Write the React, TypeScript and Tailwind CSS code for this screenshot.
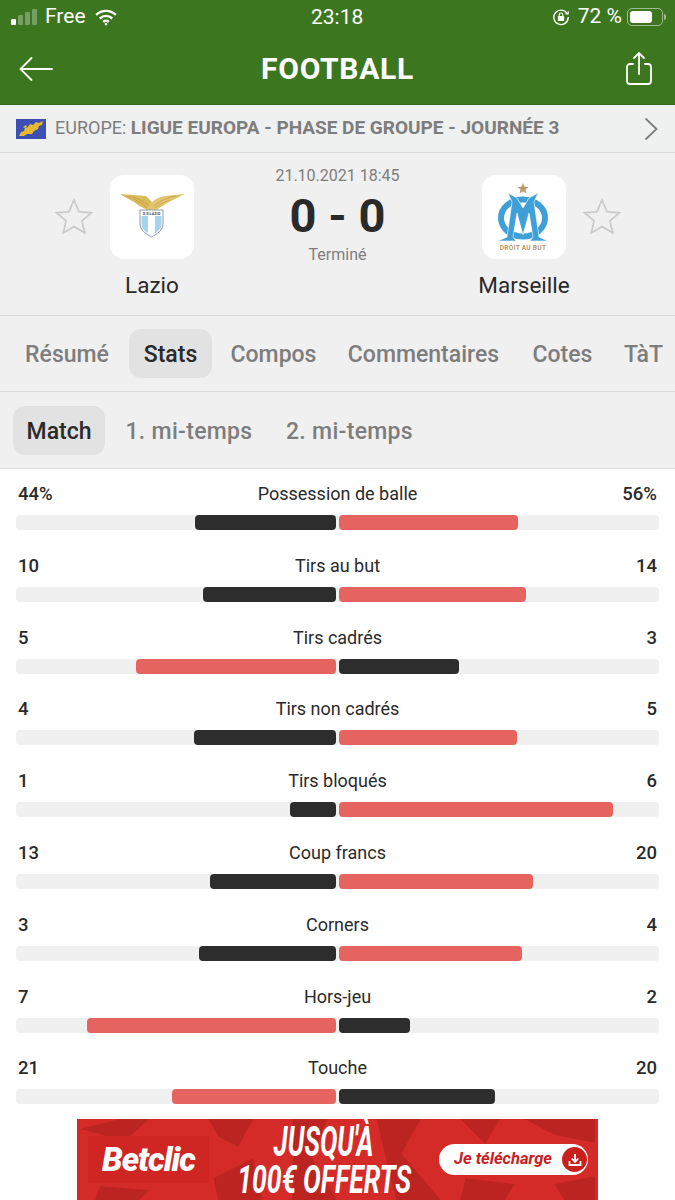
const STATS = [
  { label: 'Possession de balle', left: '44%', right: '56%', l: 44, r: 56 },
  { label: 'Tirs au but', left: '10', right: '14', l: 10, r: 14 },
  { label: 'Tirs cadrés', left: '5', right: '3', l: 5, r: 3 },
  { label: 'Tirs non cadrés', left: '4', right: '5', l: 4, r: 5 },
  { label: 'Tirs bloqués', left: '1', right: '6', l: 1, r: 6 },
  { label: 'Coup francs', left: '13', right: '20', l: 13, r: 20 },
  { label: 'Corners', left: '3', right: '4', l: 3, r: 4 },
  { label: 'Hors-jeu', left: '7', right: '2', l: 7, r: 2 },
  { label: 'Touche', left: '21', right: '20', l: 21, r: 20 },
];

const TABS = [
  { name: 'Résumé', w: 'w-[108px]' },
  { name: 'Stats', w: 'w-[83px]' },
  { name: 'Compos', w: 'w-[107px]' },
  { name: 'Commentaires', w: 'w-[177px]' },
  { name: 'Cotes', w: 'w-[85px]' },
  { name: 'TàT', w: 'w-[61px]' },
];
const SUB_TABS = [
  { name: 'Match', w: 'w-[92px]' },
  { name: '1. mi-temps', w: 'w-[152px]' },
  { name: '2. mi-temps', w: 'w-[153px]' },
];

function StatusBar() {
  return (
    <div className="relative flex h-[34px] items-center pl-[11px] pr-[9px] text-[21px] text-white">
      <div className="flex items-end gap-[2px]">
        <div className="h-[6px] w-[5px] rounded-[1px] bg-white" />
        <div className="h-[10px] w-[5px] rounded-[1px] bg-white/30" />
        <div className="h-[13px] w-[5px] rounded-[1px] bg-white/30" />
        <div className="h-[16px] w-[5px] rounded-[1px] bg-white/30" />
      </div>
      <span className="ml-[8px]">Free</span>
      <svg viewBox="0 0 24 18" className="ml-[8px] h-[17px] w-[24px]" fill="none" stroke="#fff" strokeWidth="2.6">
        <path d="M1.5 6.2C7.8 .6 16.200 .6 22.500 6.200" />
        <path d="M5.400 10C9.400 6.600 14.600 6.600 18.600 10" />
        <path d="M9 13.600c1.900-1.500 4.100-1.500 6 0" />
        <circle cx="12" cy="16" r="1.4" fill="#fff" stroke="none" />
      </svg>
      <span className="absolute left-[311px] top-[2px]">23:18</span>
      <div className="ml-auto flex items-center">
        <svg viewBox="0 0 20 20" className="h-[18px] w-[18px]" fill="none" stroke="#fff" strokeWidth="1.5">
          <path d="M17 6.500A8 8 0 1 0 18 10" />
          <path d="M15 6.500h3V3.500" strokeWidth="1.2" />
          <rect x="6.500" y="9" width="7" height="5.500" rx="1" fill="#fff" stroke="none" />
          <path d="M8 9V7.500a2 2 0 0 1 4 0V9" strokeWidth="1.2" />
        </svg>
        <span className="ml-[8px]">72 %</span>
        <div className="ml-[5px] flex h-[18px] w-[36px] items-center rounded-[5px] border border-white/50 p-[2px]">
          <div className="h-full w-[72%] rounded-[3px] bg-white" />
        </div>
        <div className="ml-[1px] h-[6px] w-[2px] rounded-r-sm bg-white/50" />
      </div>
    </div>
  );
}

function OutlineStar({ className }: { className: string }) {
  return (
    <svg viewBox="0 0 38 36" className={className} fill="none" stroke="#c9c9c9" strokeWidth="1.7" strokeLinejoin="miter">
      <path d="M19 2l5 11.800 12.300 1-9.400 8.100 2.900 12.100L19 28.500 8.200 35l2.900-12.100L1.700 14.800l12.300-1z" />
    </svg>
  );
}

function LazioLogo() {
  return (
    <svg viewBox="0 0 84 84" className="h-[84px] w-[84px]">
      <path d="M10 19 L36 21 L41 26 L45 33 L38 35 C32 33 28 30 24 27 C19 24 14 22 10 19Z" fill="#dcba5c" />
      <path d="M74 19 L54 21 L46 24 L40 29 L36 35 L46 35 C51 32 55 29 59 27 C64 24 70 22 74 19Z" fill="#e3c56f" />
      <path d="M17 21 C26 23 33 25 39 31M24 24 C29 27 33 29 37 33" stroke="#b8963c" strokeWidth=".6" fill="none" />
      <path d="M67 21 C58 22 50 26 44 31M60 25 C54 27 49 30 45 33" stroke="#b8963c" strokeWidth=".6" fill="none" />
      <path d="M30 35 H53 V49 C53 55 47 59 41.500 62 C36 59 30 55 30 49Z" fill="#fff" stroke="#8d97a8" strokeWidth="1" />
      <path d="M31.500 41 H51.500 V49 C51.500 54 46 58 41.500 60.500 C37 58 31.500 54 31.500 49Z" fill="#a6d3ee" />
      <path d="M38 41 H45 V58.500 L41.500 60.500 L38 58.500Z" fill="#fff" />
      <text x="41.500" y="39.800" textAnchor="middle" fontSize="3.800" fontWeight="700" fill="#3a4a60" fontFamily="Roboto, sans-serif">S.S.LAZIO</text>
    </svg>
  );
}

function OmLogo() {
  return (
    <svg viewBox="0 0 84 84" className="h-[84px] w-[84px]">
      <path d="M41 8l1.500 3.800 4.100.2-3.200 2.600 1.100 4-3.500-2.300-3.500 2.300 1.100-4-3.200-2.600 4.100-.2z" fill="#b9986a" />
      <ellipse cx="41" cy="43" rx="22" ry="18.500" fill="none" stroke="#3fa0d8" strokeWidth="6" />
      <path d="M26 18 L35 23 L41 33 L47 23 L56 18 L52 27 L57 62 L66 66 H48 L51 62 L47 38 L41 60 L35 38 L31 62 L34 66 H16 L25 62 L30 27Z" fill="#3fa0d8" stroke="#fff" strokeWidth=".6" />
      <text x="41" y="75" textAnchor="middle" fontSize="6.500" fontWeight="700" letterSpacing=".3" fill="#b9986a" fontFamily="Roboto, sans-serif">DROIT AU BUT</text>
    </svg>
  );
}

function Team({ name, children }: { name: string; children: React.ReactNode }) {
  return (
    <div className="flex w-[84px] flex-col items-center">
      <div className="h-[84px] w-[84px] rounded-[14px] bg-white">{children}</div>
      <span className="mt-[12px] whitespace-nowrap text-[22.500px] leading-[28px] text-[#2a2a2a]">{name}</span>
    </div>
  );
}

function StatRow({ label, left, right, l, r }: (typeof STATS)[number]) {
  const total = l + r;
  const leftWins = l > r;
  return (
    <div className="h-[71.800px] px-[16px] pt-[11px]">
      <div className="flex h-[24px] items-baseline justify-between px-[2px] text-[18px] text-[#2a2a2a]">
        <span className="text-[18.500px] font-medium">{left}</span>
        <span>{label}</span>
        <span className="text-[18.500px] font-medium">{right}</span>
      </div>
      <div className="mt-[11px] flex h-[15px] gap-[3.500px] overflow-hidden rounded-[4px] bg-[#f0f0f0]">
        <div className="flex flex-1 justify-end">
          <div className={`h-full rounded-[4px] ${leftWins ? 'bg-[#e6645f]' : 'bg-[#2d2d2d]'}`} style={{ width: `${(l / total) * 100}%` }} />
        </div>
        <div className="flex flex-1">
          <div className={`h-full rounded-[4px] ${leftWins ? 'bg-[#2d2d2d]' : 'bg-[#e6645f]'}`} style={{ width: `${(r / total) * 100}%` }} />
        </div>
      </div>
    </div>
  );
}

function Banner() {
  return (
    <div className="relative mx-auto mt-[4px] flex h-[81px] w-[521px] items-center overflow-hidden bg-[#d42b28]">
      <svg viewBox="0 0 521 82" className="absolute inset-0 h-full w-full" fill="#bb2421">
        <path d="M0 10 L40 0 H70 L45 22Z" />
        <path d="M130 0 H175 L160 28 L140 18Z" />
        <path d="M135 60 L175 40 L185 82 H140Z" />
        <path d="M215 0 H250 L235 40 L260 82 H215Z" />
        <path d="M300 0 H345 L325 35 L365 82 H320Z" />
        <path d="M385 0 H425 L410 25Z" />
        <path d="M450 0 H521 V24 L480 16Z" />
        <path d="M20 68 L70 72 L60 82 H15Z" />
        <path d="M390 60 L440 66 L430 82 H385Z" />
        <path d="M480 66 L521 58 V82 H490Z" />
      </svg>
      <div className="relative ml-[11px] flex h-[47px] w-[121px] items-center justify-center bg-[#cf2523] text-[33px] font-black italic tracking-[-1px] text-white">
        Betclic
      </div>
      <div className="relative flex w-[230px] flex-col items-center pt-[3px] font-bold italic leading-[38px] text-white">
        <span className="scale-x-[.62] whitespace-nowrap text-[42px]">JUSQU'À</span>
        <span className="scale-x-[.7] whitespace-nowrap text-[38px]">100€ OFFERTS</span>
      </div>
      <div className="relative flex h-[31px] w-[149px] items-center rounded-full bg-white pl-[15px] text-[16.500px] font-bold italic whitespace-nowrap text-[#c9201e]">
        Je télécharge
        <div className="absolute right-[1px] flex h-[25px] w-[25px] items-center justify-center rounded-full bg-[#c9201e]">
          <svg viewBox="0 0 16 16" className="h-[16px] w-[16px]" fill="none" stroke="#fff" strokeWidth="1.800">
            <path d="M8 2v7M4.800 6.500 8 10l3.200-3.500M2.500 9v4h11V9" />
          </svg>
        </div>
      </div>
    </div>
  );
}

export default function App() {
  return (
    <div className="h-[1200px] w-[675px] overflow-hidden bg-white font-['Roboto',sans-serif]">
      <div className="h-[105px] border-b border-[#35681d] bg-[#3c7720]">
        <StatusBar />
        <div className="relative flex h-[69px] items-center justify-between pl-[19px] pr-[22px]">
          <svg viewBox="0 0 34 24" className="h-[24px] w-[34px]" fill="none" stroke="#fff" strokeWidth="1.800" strokeLinecap="round">
            <path d="M33 12H1.500M12.500 1 1.500 12l11 11" />
          </svg>
          <span className="absolute left-0 right-0 text-center text-[30px] font-bold tracking-[.7px] text-white">FOOTBALL</span>
          <svg viewBox="0 0 28 36" className="h-[36px] w-[28px]" fill="none" stroke="#fff" strokeWidth="1.800" strokeLinecap="round">
            <path d="M8 13H5a3 3 0 0 0-3 3v14a3 3 0 0 0 3 3h18a3 3 0 0 0 3-3V16a3 3 0 0 0-3-3h-3" />
            <path d="M14 23V2M9 7l5-5 5 5" />
          </svg>
        </div>
      </div>

      <div className="flex h-[48px] items-center border-b border-[#dcdcdc] bg-[#eff0f0] pl-[16px] pr-[17px] text-[18px] text-[#7d7d7d]">
        <svg viewBox="0 0 30 20" className="h-[20px] w-[30px]">
          <rect width="30" height="20" fill="#3d4fb5" />
          <path d="M3 17l2-4 3-1 1-3 3-1 2-3 3 1 3-3 3 1 4-2-1 4-3 1-1 3-4 2-2 3-5 0-3 2z" fill="#e8b830" />
          <path d="M7 8l3-2 1 2-3 1z" fill="#e8b830" />
        </svg>
        <span className="ml-[9px] whitespace-nowrap">
          EUROPE: <span className="text-[19px] font-bold">LIGUE EUROPA - PHASE DE GROUPE - JOURNÉE 3</span>
        </span>
        <svg viewBox="0 0 14 24" className="ml-auto h-[24px] w-[14px]" fill="none" stroke="#7d7d7d" strokeWidth="1.800">
          <path d="M1.500 1.500 12.500 12 1.500 22.500" />
        </svg>
      </div>

      <div className="flex h-[163px] justify-between border-b border-[#dcdcdc] bg-[#f0f0f0] pl-[55px] pr-[54px] pt-[22px]">
        <div className="flex">
          <OutlineStar className="mt-[23px] h-[36px] w-[38px]" />
          <div className="ml-[17px]">
            <Team name="Lazio"><LazioLogo /></Team>
          </div>
        </div>
        <div className="-ml-[1px] flex flex-col items-center">
          <span className="mt-[-10px] text-[16px] leading-[22px] text-[#7d7d7d]">21.10.2021 18:45</span>
          <span className="mt-[3px] text-[47px] font-bold leading-[52px] text-[#2a2a2a]">0 - 0</span>
          <span className="mt-[2px] text-[16px] leading-[22px] text-[#7d7d7d]">Terminé</span>
        </div>
        <div className="flex">
          <Team name="Marseille"><OmLogo /></Team>
          <OutlineStar className="ml-[17px] mt-[23px] h-[36px] w-[38px]" />
        </div>
      </div>

      <div className="flex h-[76px] items-center gap-[8px] overflow-hidden border-b border-[#dcdcdc] bg-[#f0f0f0] pl-[13px]">
        {TABS.map(t => (
          <div key={t.name} className={`flex h-[49px] shrink-0 items-center justify-center whitespace-nowrap rounded-[12px] pt-[3px] text-[23px] font-medium ${t.w} ${t.name === 'Stats' ? 'bg-[#e2e2e2] text-[#2a2a2a]' : 'text-[#7d7d7d]'}`}>{t.name}</div>
        ))}
      </div>

      <div className="flex h-[77px] items-center gap-[8px] border-b border-[#dcdcdc] bg-[#f0f0f0] pl-[13px]">
        {SUB_TABS.map(t => (
          <div key={t.name} className={`flex h-[49px] items-center justify-center whitespace-nowrap rounded-[12px] pt-[4px] text-[23px] font-medium ${t.w} ${t.name === 'Match' ? 'bg-[#e2e2e2] text-[#2a2a2a]' : 'tracking-[.3px] text-[#7d7d7d]'}`}>{t.name}</div>
        ))}
      </div>

      <div>
        {STATS.map(s => <StatRow key={s.label} {...s} />)}
      </div>

      <Banner />
    </div>
  );
}
